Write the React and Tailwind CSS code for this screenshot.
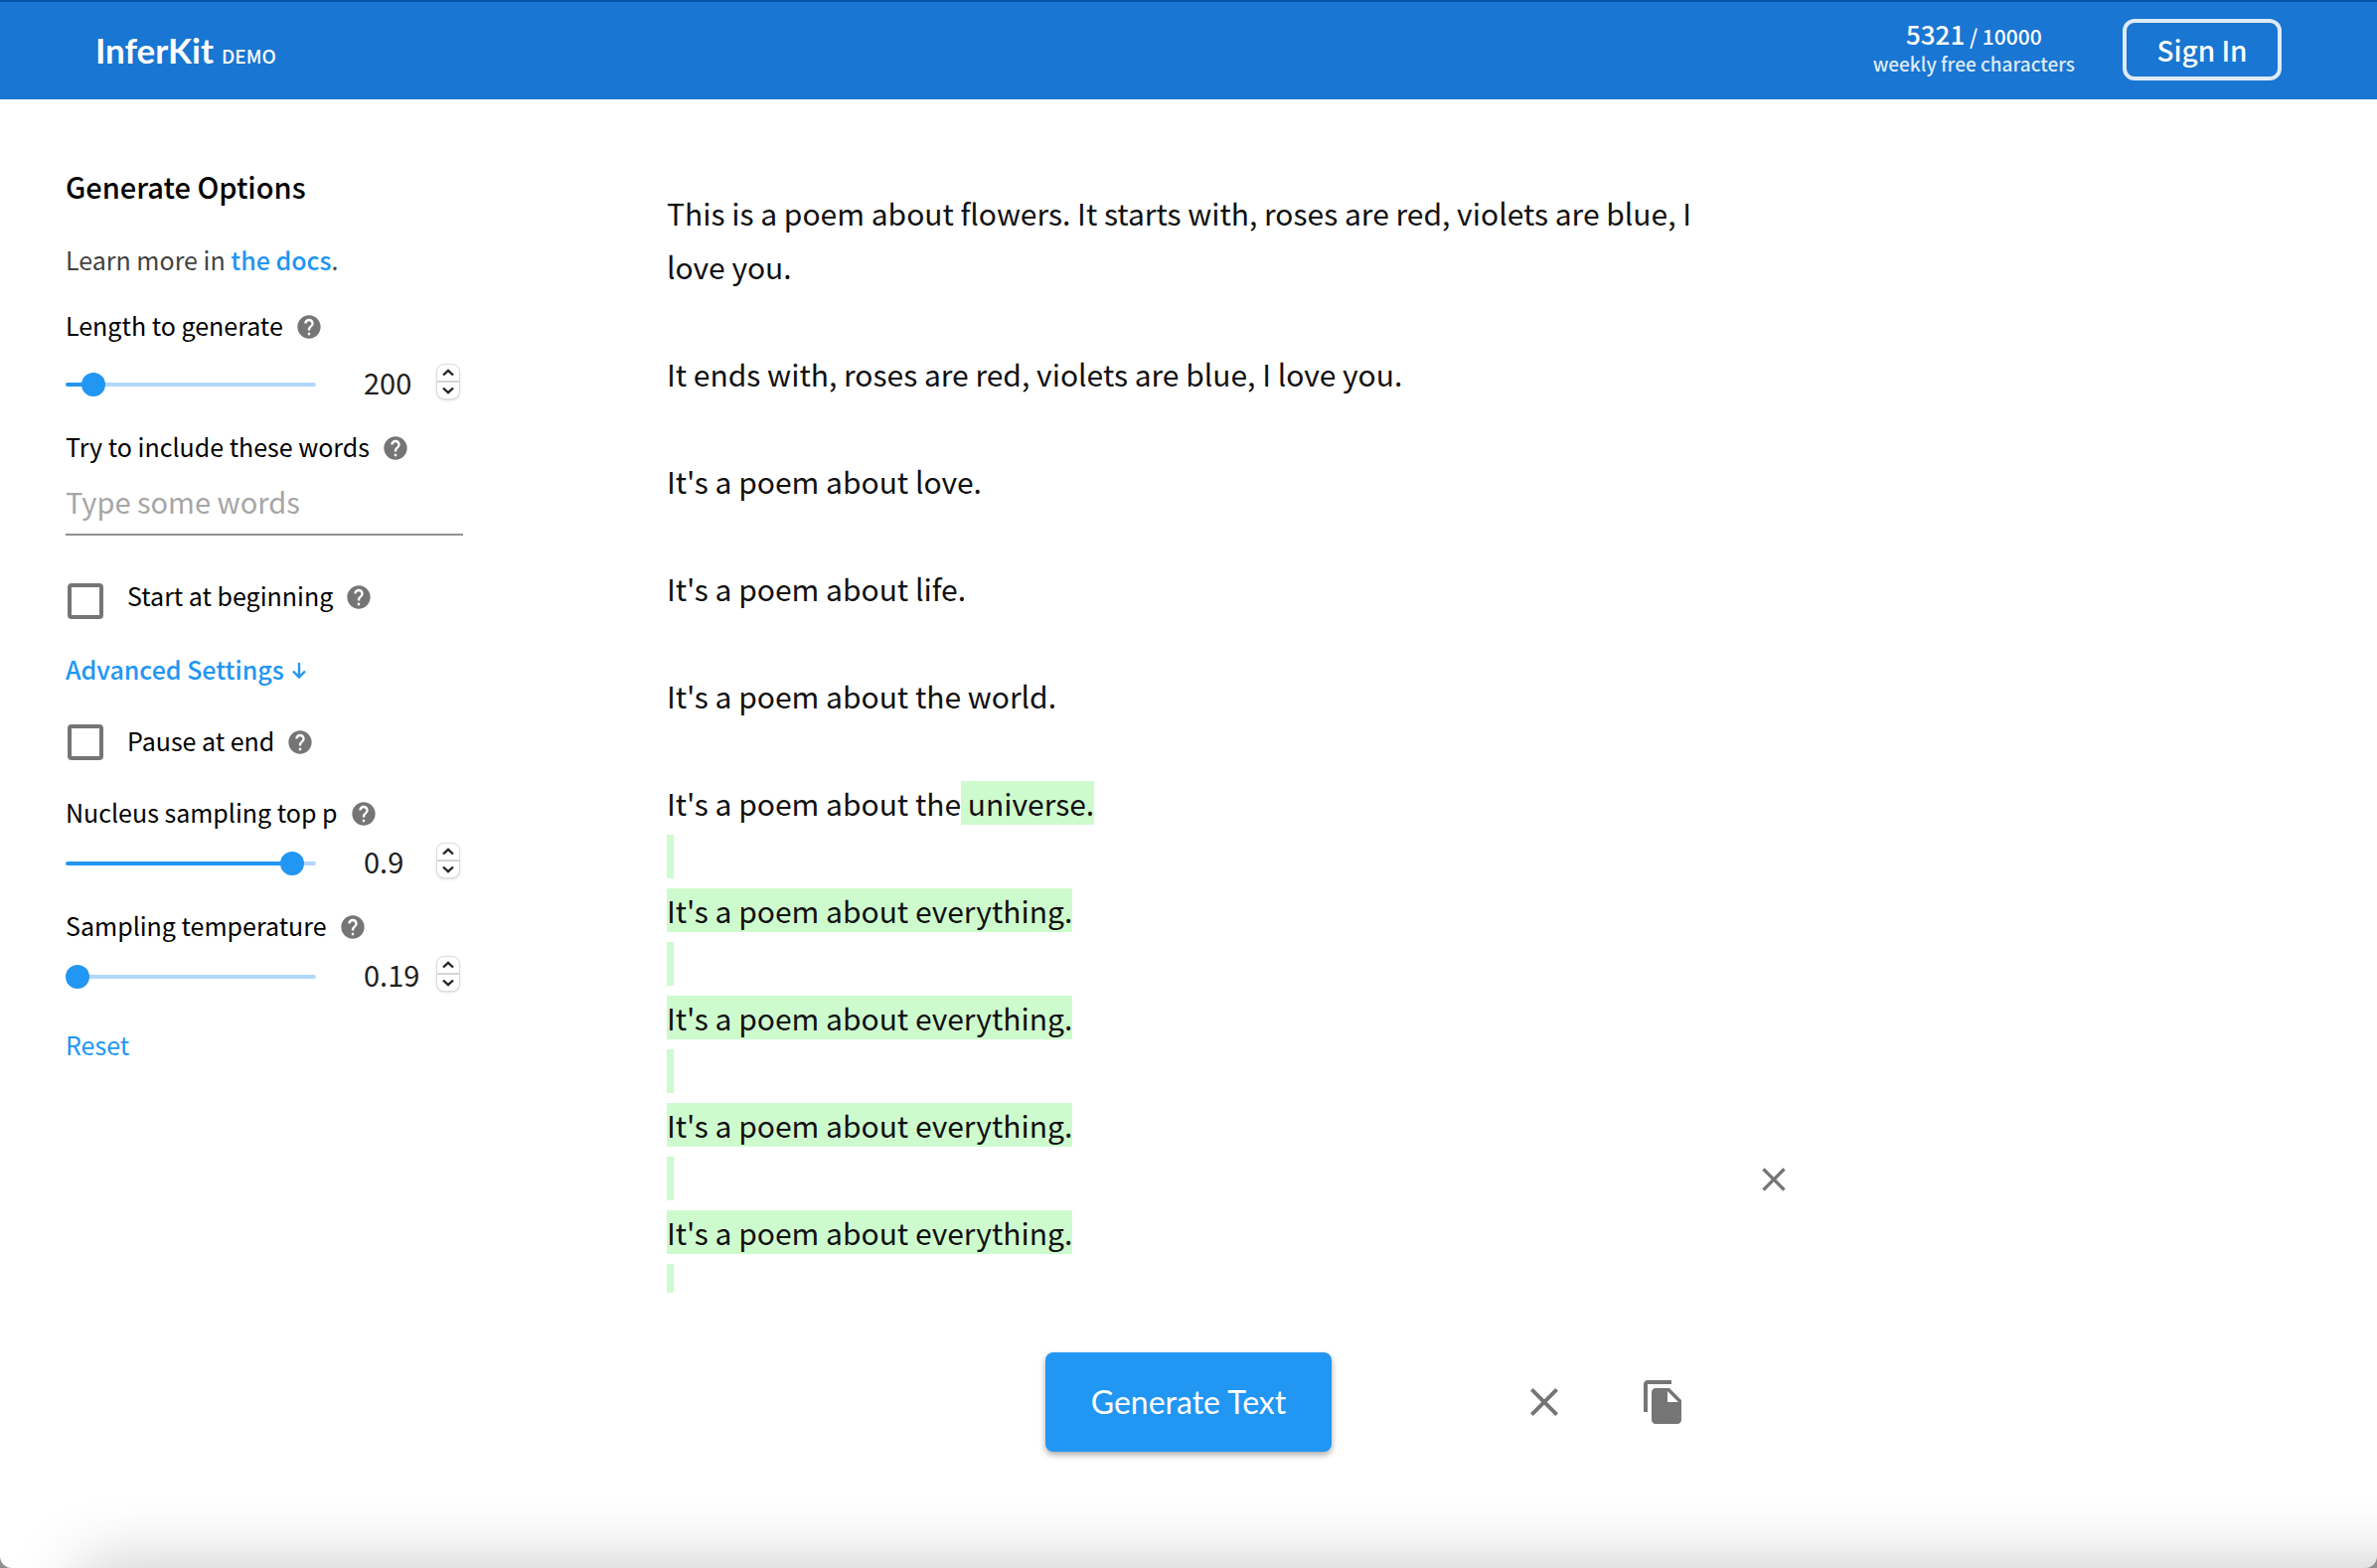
import { useState } from "react";

const HELP =
  "M12 2C6.48 2 2 6.48 2 12s4.48 10 10 10 10-4.48 10-10S17.52 2 12 2zm1 17h-2v-2h2v2zm2.07-7.75l-.9.92C13.45 12.9 13 13.5 13 15h-2v-.5c0-1.1.45-2.1 1.17-2.83l1.24-1.26c.37-.36.59-.86.59-1.41 0-1.1-.9-2-2-2s-2 .9-2 2H8c0-2.21 1.79-4 4-4s4 1.79 4 4c0 .88-.36 1.68-.93 2.25z";
const CLOSE =
  "M19 6.41L17.59 5 12 10.59 6.41 5 5 6.41 10.59 12 5 17.59 6.41 19 12 13.41 17.59 19 19 17.59 13.41 12z";
const COPY =
  "M16 1H4c-1.1 0-2 .9-2 2v14h2V3h12V1zm-1 4l6 6v10c0 1.1-.9 2-2 2H7.99C6.89 23 6 22.1 6 21l.01-14c0-1.1.89-2 1.99-2h7zm-1 7h5.5L14 6.5V12z";

function Icon({ d, className }) {
  return (
    <svg viewBox="0 0 24 24" fill="currentColor" aria-hidden="true" className={className}>
      <path d={d} />
    </svg>
  );
}

function Help({ topic }) {
  return (
    <button type="button" aria-label={`Help: ${topic}`} className="text-[#757575]">
      <Icon d={HELP} className="size-7" />
    </button>
  );
}

function Stepper({ label, onStep }) {
  return (
    <div className="mb-1.5 flex h-9 w-6 flex-col divide-y-2 divide-[#d4d4d4] overflow-hidden rounded-lg border border-[#dcdcdc] bg-white shadow-sm">
      {[1, -1].map((dir) => (
        <button
          key={dir}
          type="button"
          aria-label={`${dir > 0 ? "Increase" : "Decrease"} ${label}`}
          onClick={() => onStep(dir)}
          className="flex flex-1 items-center justify-center"
        >
          <svg viewBox="0 0 12 8" fill="none" stroke="#262626" strokeWidth="2.4" className="h-2 w-3" aria-hidden="true">
            <path d={dir > 0 ? "M1 6.5 6 1.8l5 4.7" : "M1 1.5 6 6.2l5-4.7"} />
          </svg>
        </button>
      ))}
    </div>
  );
}

function SliderField({ id, label, initial, min, max, step, gap = "gap-2" }) {
  const [value, setValue] = useState(initial);
  const ratio = Math.min(1, Math.max(0, (value - min) / (max - min)));
  const stop = `calc(12px + (100% - 24px) * ${ratio})`;
  return (
    <div className={`flex flex-col ${gap}`}>
      <div className="flex h-9 items-center gap-3">
        <label htmlFor={id} className="pb-0.5">
          {label}
        </label>
        <Help topic={label} />
      </div>
      <div className="flex h-12 items-center">
        <input
          id={id}
          type="range"
          min={min}
          max={max}
          step={step}
          value={value}
          onChange={(e) => setValue(Number(e.target.value))}
          style={{
            backgroundImage: `linear-gradient(to right, #2196f3 ${stop}, #b1d7fb ${stop})`,
          }}
          className="h-1 w-63 appearance-none rounded-full [&::-webkit-slider-thumb]:size-6 [&::-webkit-slider-thumb]:appearance-none [&::-webkit-slider-thumb]:rounded-full [&::-webkit-slider-thumb]:bg-[#2196f3]"
        />
        <input
          type="number"
          aria-label={`${label} value`}
          value={value}
          step={step}
          onChange={(e) => setValue(Number(e.target.value))}
          className="mb-1 ml-12 h-10 w-[73px] appearance-none text-[29px] text-[#212121] [appearance:textfield]"
        />
        <Stepper label={label} onStep={(d) => setValue((v) => Number((v + d * step).toFixed(2)))} />
      </div>
    </div>
  );
}

function CheckField({ id, label, align = "items-center" }) {
  return (
    <div className={`flex ${align}`}>
      <input
        id={id}
        type="checkbox"
        className="ml-0.5 size-9 appearance-none rounded-sm border-4 border-[#757575] checked:bg-[#2196f3]"
      />
      <div className="ml-6 flex h-7 items-center gap-3">
        <label htmlFor={id} className="pb-0.5">
          {label}
        </label>
        <Help topic={label} />
      </div>
    </div>
  );
}

const PROMPT = [
  "This is a poem about flowers. It starts with, roses are red, violets are blue, I love you.",
  "It ends with, roses are red, violets are blue, I love you.",
  "It's a poem about love.",
  "It's a poem about life.",
  "It's a poem about the world.",
];

const GENERATED = [1, 2, 3, 4].flatMap(() => ["\u00a0", "It's a poem about everything."]).concat("\u00a0");

function Mark({ children }) {
  return <mark className="bg-[#cefbce] text-inherit">{children}</mark>;
}

export default function App() {
  return (
    <div className="bg-[#8f8f8f]">
      <div className="relative flex min-h-screen flex-col overflow-hidden rounded-b-xl bg-white font-['Noto_Sans_CJK_SC',sans-serif] text-[25px] text-black">
        <header className="flex h-25 items-center justify-between border-t-2 border-[#0353a8] bg-[#1976d2] px-24 pb-0.5 text-white">
          <a href="#home" className="flex items-baseline gap-2">
            <span className="font-['Lato',sans-serif] text-[35px] font-bold">InferKit</span>
            <span className="text-[19px] font-medium">DEMO</span>
          </a>
          <div className="flex items-center gap-12">
            <div className="pb-0.5 text-center font-medium">
              <div className="text-[21px] leading-7">
                <span className="text-[26px] leading-7">5321</span> / 10000
              </div>
              <div className="text-[19px] leading-7 text-[#dfeaf8]">weekly free characters</div>
            </div>
            <button
              type="button"
              className="h-[62px] w-40 rounded-xl border-4 border-[#dfeaf8] text-[28px] leading-none font-medium"
            >
              Sign In
            </button>
          </div>
        </header>

        <div className="flex flex-1">
          <aside className="w-[466px] shrink-0 pt-[63px] pl-[66px]">
            <h2 className="text-[29px] leading-12 font-medium">Generate Options</h2>
            <p className="mt-8 leading-9 text-[#424242]">
              Learn more in{" "}
              <a href="#docs" className="font-medium text-[#2196f3]">
                the docs
              </a>
              .
            </p>
            <div className="mt-8">
              <SliderField id="length" label="Length to generate" initial={200} min={60} max={2060} step={1} gap="gap-4" />
            </div>
            <div className="mt-[22px] flex h-9 items-center gap-3">
              <label htmlFor="words" className="pb-0.5">
                Try to include these words
              </label>
              <Help topic="Words to include" />
            </div>
            <input
              id="words"
              type="text"
              placeholder="Type some words"
              className="mt-3 block h-[58px] w-full border-b-2 border-[#919191] pb-2.5 text-[29px] placeholder:text-[#a6a6a6]"
            />
            <div className="mt-12">
              <CheckField id="start" label="Start at beginning" align="items-start" />
            </div>
            <button type="button" className="mt-[30px] flex items-center gap-2 leading-10 font-medium text-[#2196f3]">
              Advanced Settings
              <svg
                viewBox="0 0 14 16"
                fill="none"
                stroke="currentColor"
                strokeWidth="2.4"
                className="mt-1 h-4 w-3.5"
                aria-hidden="true"
              >
                <path d="M7 0v14M1 8.5l6 6 6-6" />
              </svg>
            </button>
            <div className="mt-9">
              <CheckField id="pause" label="Pause at end" />
            </div>
            <div className="mt-9">
              <SliderField id="top-p" label="Nucleus sampling top p" initial={0.9} min={0} max={0.95} step={0.01} />
            </div>
            <div className="mt-[22px]">
              <SliderField id="temperature" label="Sampling temperature" initial={0.19} min={0.19} max={2} step={0.01} />
            </div>
            <button type="button" className="mt-6 block leading-10 text-[#2196f3]">
              Reset
            </button>
          </aside>

          <main className="ml-[205px] flex w-[1050px] flex-col">
            <div className="mt-[87px] h-[1114px] overflow-hidden text-[30px] leading-[54px] text-[#111111]">
              {PROMPT.map((line) => (
                <p key={line} className="mb-[54px]">
                  {line}
                </p>
              ))}
              <p>
                It's a poem about the<Mark> universe.</Mark>
              </p>
              {GENERATED.map((line, i) => (
                <p key={i}>
                  <Mark>{line}</Mark>
                </p>
              ))}
            </div>
            <div className="mt-[60px] flex items-center">
              <button
                type="button"
                className="ml-[381px] h-25 w-72 rounded-lg bg-[#2196f3] font-['Lato',sans-serif] text-[32px] text-white shadow-[0_3px_6px_rgba(0,0,0,0.35)]"
              >
                Generate Text
              </button>
              <button type="button" aria-label="Clear text" className="ml-[190px] text-[#757575]">
                <Icon d={CLOSE} className="size-12" />
              </button>
              <button type="button" aria-label="Copy text" className="ml-18 text-[#757575]">
                <Icon d={COPY} className="size-12" />
              </button>
            </div>
          </main>
          <button type="button" aria-label="Dismiss" className="mt-[1067px] ml-11 self-start text-[#757575]">
            <Icon d={CLOSE} className="size-10" />
          </button>
        </div>
        <div className="pointer-events-none absolute top-full -right-24 left-20 h-24 shadow-[0_0_70px_rgba(0,0,0,0.23)]" />
      </div>
    </div>
  );
}
